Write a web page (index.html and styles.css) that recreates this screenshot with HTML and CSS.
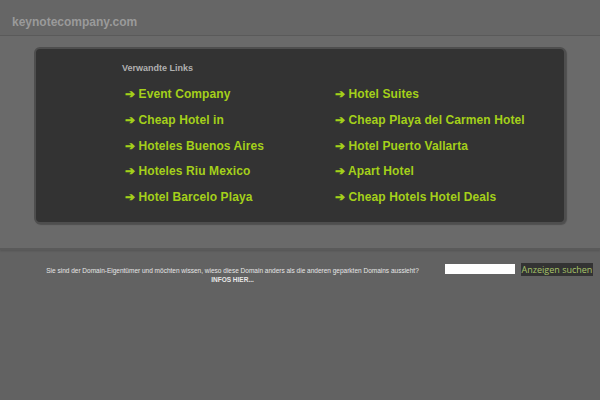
FILE: index.html
```html
<!DOCTYPE html>
<html>
<head>
<meta charset="utf-8">
<link rel="stylesheet" href="styles.css">
</head>
<body>
<header class="top">
  <span class="domain">keynotecompany.com</span>
</header>
<section class="band">
  <div class="box">
    <div class="title">Verwandte Links</div>
    <ul class="links">
      <li><a href="#">➔ Event Company</a></li>
      <li><a href="#">➔ Hotel Suites</a></li>
      <li><a href="#">➔ Cheap Hotel in</a></li>
      <li><a href="#">➔ Cheap Playa del Carmen Hotel</a></li>
      <li><a href="#">➔ Hoteles Buenos Aires</a></li>
      <li><a href="#">➔ Hotel Puerto Vallarta</a></li>
      <li><a href="#">➔ Hoteles Riu Mexico</a></li>
      <li><a href="#">➔ Apart Hotel</a></li>
      <li><a href="#">➔ Hotel Barcelo Playa</a></li>
      <li><a href="#">➔ Cheap Hotels Hotel Deals</a></li>
    </ul>
  </div>
</section>
<footer class="bottom">
  <div class="owner">
    <div>Sie sind der Domain-Eigentümer und möchten wissen, wieso diese Domain anders als die anderen geparkten Domains aussieht?</div>
    <div class="infos">INFOS HIER...</div>
  </div>
  <input class="search" type="text">
  <button class="btn">Anzeigen suchen</button>
</footer>
</body>
</html>
```
FILE: styles.css
```css
html, body {
  margin: 0;
  padding: 0;
  background: #626262;
  font-family: "Liberation Sans", Arial, sans-serif;
}
.top {
  height: 36px;
  background: #666;
  border-bottom: 1px solid #5b5b5b;
  display: flex;
  align-items: center;
  padding-left: 12px;
  padding-top: 8px;
  box-sizing: border-box;
}
.domain {
  font-size: 12px;
  font-weight: bold;
  color: #9a9a9a;
}
.band {
  background: #6a6a6a;
  padding: 11px 34px 24px 34px;
  border-bottom: 2px solid #5a5a5a;
  box-shadow: 0 1px 2px rgba(0,0,0,0.15);
}
.box {
  height: 161px;
  background: #333;
  border: 2px solid #4e4e4e;
  border-radius: 6px;
  box-shadow: 1px 1px 1px rgba(0,0,0,0.25);
  padding: 12px 0 0 86px;
  box-sizing: content-box;
}
.title {
  font-size: 9px;
  font-weight: bold;
  color: #b0b0b0;
  margin: 2px 0 0 0;
}
.links {
  list-style: none;
  margin: 9px 0 0 3px;
  padding: 0;
  display: grid;
  grid-template-columns: 210px 210px;
  grid-auto-rows: 25.8px;
}
.links a {
  font-size: 12px;
  font-weight: bold;
  color: #a4d01a;
  text-decoration: none;
  line-height: 25.8px;
  letter-spacing: 0.1px;
}
.bottom {
  display: flex;
  align-items: flex-start;
  padding-top: 13px;
}
.owner {
  width: 425px;
  padding-left: 20px;
  text-align: center;
  font-size: 6.5px;
  color: #e6e6e6;
  line-height: 9px;
  padding-top: 3px;
}
.infos {
  font-weight: bold;
}
.search {
  width: 70px;
  height: 10px;
  margin: 1px 0 0 0;
  padding: 0;
  border: none;
  background: #fff;
  box-sizing: border-box;
}
.btn {
  margin-left: 6px;
  width: 72px;
  height: 13px;
  padding: 0;
  border: none;
  background: #333;
  color: #a8c46a;
  font-family: "Open Sans", "Liberation Sans", sans-serif;
  font-size: 9px;
  line-height: 13px;
}
```
